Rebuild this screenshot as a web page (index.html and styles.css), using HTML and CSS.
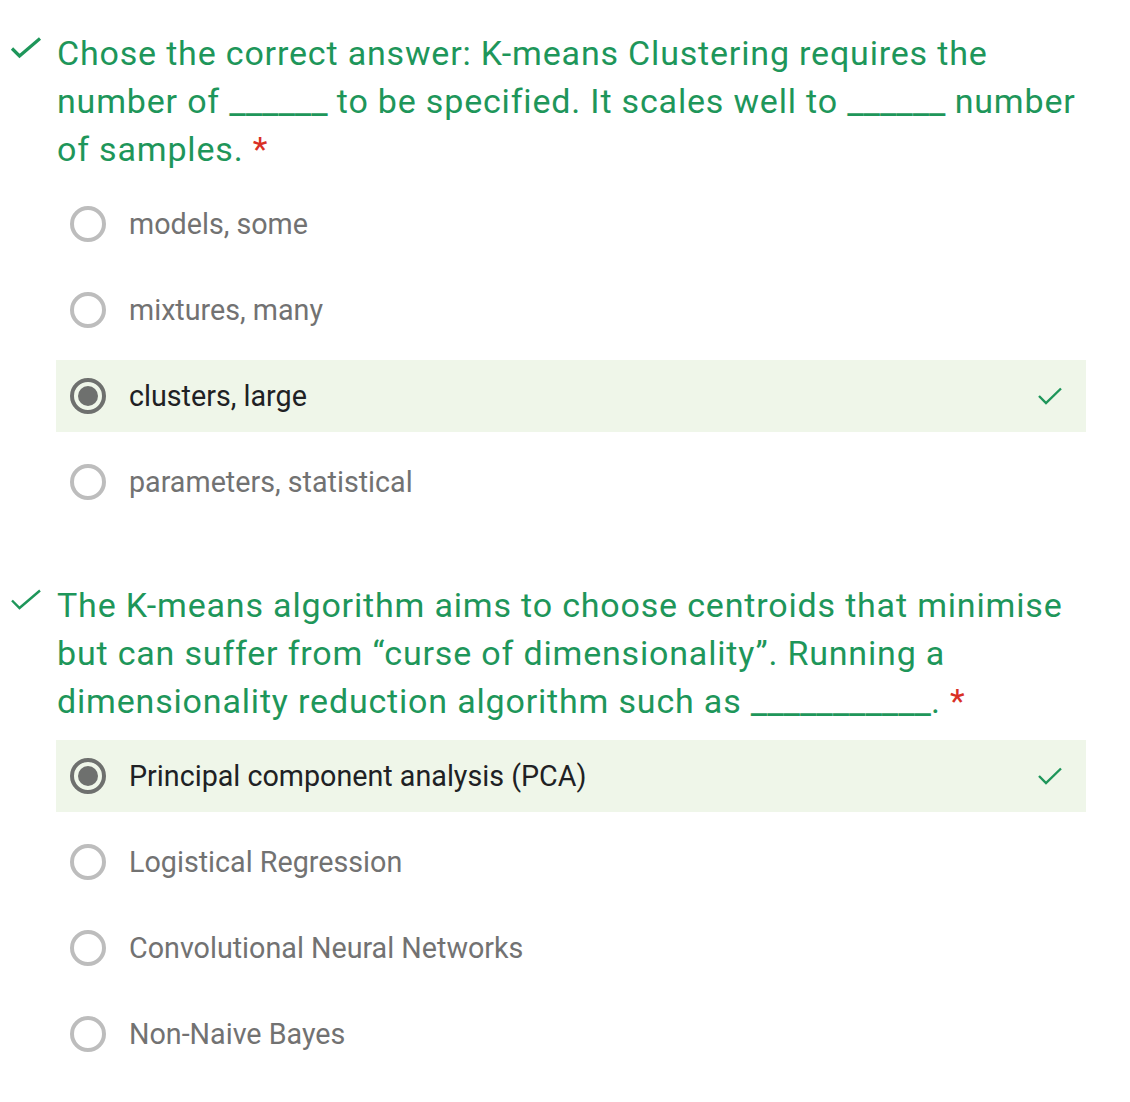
FILE: index.html
```html
<!DOCTYPE html>
<html>
<head>
<meta charset="utf-8">
<link rel="stylesheet" href="styles.css">
</head>
<body>
<div class="quiz">
  <section class="question">
    <div class="q-head">
      <svg class="q-check" viewBox="0 0 32 22" width="32" height="22"><path d="M2 11.5 L9.5 19 L30 1.5" fill="none" stroke="#1e965a" stroke-width="3.2"/></svg>
      <div class="q-title">Chose the correct answer: K-means Clustering requires the number of <span class="blank">______</span> to be specified. It scales well to <span class="blank">______</span> number of samples. <span class="req">*</span></div>
    </div>
    <div class="options">
      <div class="opt"><span class="radio"></span><span class="opt-text">models, some</span></div>
      <div class="opt"><span class="radio"></span><span class="opt-text">mixtures, many</span></div>
      <div class="opt sel"><span class="radio on"></span><span class="opt-text">clusters, large</span><svg class="opt-check" viewBox="0 0 24 18" width="24" height="18"><path d="M1 9 L8 16 L23 1.5" fill="none" stroke="#1e965a" stroke-width="2.4"/></svg></div>
      <div class="opt"><span class="radio"></span><span class="opt-text">parameters, statistical</span></div>
    </div>
  </section>
  <section class="question q2">
    <div class="q-head">
      <svg class="q-check" viewBox="0 0 32 22" width="32" height="22"><path d="M2 11.5 L9.5 19 L30 1.5" fill="none" stroke="#1e965a" stroke-width="2.4"/></svg>
      <div class="q-title">The K-means algorithm aims to choose centroids that minimise but can suffer from “curse of dimensionality”. Running a dimensionality reduction algorithm such as <span class="blank">___________</span>. <span class="req">*</span></div>
    </div>
    <div class="options">
      <div class="opt sel"><span class="radio on"></span><span class="opt-text">Principal component analysis (PCA)</span><svg class="opt-check" viewBox="0 0 24 18" width="24" height="18"><path d="M1 9 L8 16 L23 1.5" fill="none" stroke="#1e965a" stroke-width="2.4"/></svg></div>
      <div class="opt"><span class="radio"></span><span class="opt-text">Logistical Regression</span></div>
      <div class="opt"><span class="radio"></span><span class="opt-text">Convolutional Neural Networks</span></div>
      <div class="opt"><span class="radio"></span><span class="opt-text">Non-Naive Bayes</span></div>
    </div>
  </section>
</div>
</body>
</html>
```
FILE: styles.css
```css
* { box-sizing: border-box; }
html, body { margin: 0; padding: 0; background: #fff; }
body { font-family: Roboto, "Noto Sans", sans-serif; }
.quiz { padding: 29px 44px 0 0; width: 1130px; }
.question { display: flex; flex-direction: column; }
.q2 { margin-top: 63px; }
.q-head { display: flex; align-items: flex-start; }
.q-check { flex: none; margin: 8px 15px 0 10px; }
.q-title { font-size: 34px; line-height: 48px; letter-spacing: 0.82px; color: #1e965a; flex: 1; }
.blank { font-size: 36.3px; letter-spacing: 0; line-height: 1; }
.req { color: #d93025; }
.options { display: flex; flex-direction: column; gap: 14px; margin-top: 15px; margin-left: 56px; }
.opt { display: flex; align-items: center; height: 72px; padding-left: 14px; padding-right: 24px; }
.opt.sel { background: #eff6e9; }
.radio { width: 36px; height: 36px; border: 4px solid #bdbdbd; border-radius: 50%; flex: none; position: relative; }
.radio.on { border-color: #6e706e; }
.radio.on::after { content: ""; position: absolute; left: 4px; top: 4px; width: 20px; height: 20px; border-radius: 50%; background: #6e706e; }
.opt-text { font-size: 28.7px; color: #727272; margin-left: 23px; flex: 1; }
.sel .opt-text { color: #202124; }
.opt-check { flex: none; }
```
